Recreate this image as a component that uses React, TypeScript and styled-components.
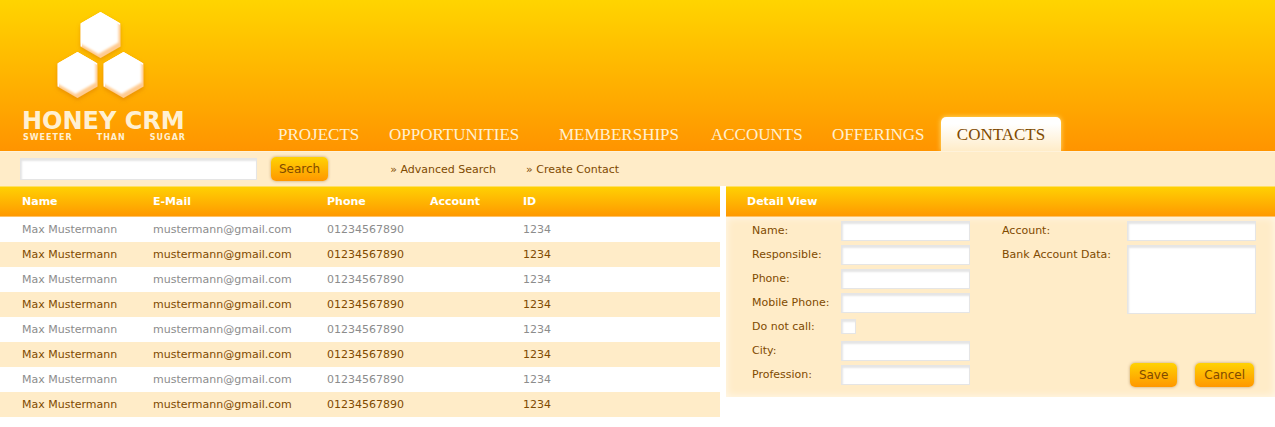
import React from "react";
import styled, { createGlobalStyle, css } from "styled-components";

const cream = "#ffecc8";
const brown = "#804a00";
const honey = "linear-gradient(#ffd203, #ff9700)";

const GlobalStyle = createGlobalStyle`
  * { box-sizing: border-box; }
  body {
    margin: 0;
    background: #fff;
    color: ${brown};
    font: 11px/14px "DejaVu Sans", Verdana, sans-serif;
  }
`;

const Header = styled.header`
  display: flex;
  align-items: flex-end;
  height: 151px;
  background: linear-gradient(#ffd400, #ff9400);
`;

const Brand = styled.div`
  flex: none;
  width: 278px;
  padding: 0 92px 9px 22px;
  color: #fff0d2;
  font-weight: bold;
`;

const Logo = styled.svg`
  display: block;
  width: 100px;
  height: 100px;
  margin-left: 28px;
`;

const BrandName = styled.div`
  font-size: 24px;
  line-height: 26px;
  white-space: nowrap;
`;

const Tagline = styled.div`
  display: flex;
  justify-content: space-between;
  padding-left: 1px;
  font-size: 8px;
  line-height: 8px;
  letter-spacing: 1px;
`;

const Nav = styled.nav`
  display: grid;
  grid-template-columns: 111px 170px 152px 121px 109px 120px;
  align-items: end;
`;

const NavLink = styled.a<{ $active?: boolean }>`
  height: 34px;
  color: #fff0d0;
  font: 17px/36px "Liberation Serif", serif;
  text-decoration: none;
  white-space: nowrap;
  ${(p) =>
    p.$active &&
    css`
      border-radius: 5px 5px 0 0;
      background: linear-gradient(#fff 20%, ${cream});
      box-shadow: 0 0 5px #ffe27a;
      color: ${brown};
      text-align: center;
      clip-path: inset(-8px -8px 0 -8px);
    `}
`;

const Toolbar = styled.form`
  display: flex;
  align-items: center;
  height: 35px;
  padding-left: 20px;
  border-top: 1px solid #fff2da;
  background: ${cream};
`;

const fieldStyle = css`
  display: block;
  margin: 0;
  padding: 2px 5px;
  border: 1px solid #e5e5e5;
  border-radius: 0;
  outline: none;
  background: #fff;
  box-shadow: inset 1px 2px 2px #e5e5e5;
  color: ${brown};
  font: inherit;
`;

const SearchInput = styled.input`
  ${fieldStyle}
  width: 237px;
  height: 22px;
`;

const Button = styled.button`
  height: 24px;
  padding: 0 9px;
  border: 0;
  border-radius: 5px;
  background: ${honey};
  box-shadow: 0 0 3px rgba(128, 74, 0, 0.5);
  color: ${brown};
  font: 12px/24px "DejaVu Sans", Verdana, sans-serif;
`;

const ToolbarLinks = styled.div`
  display: flex;
  gap: 30px;
  margin-left: 62px;
  padding-top: 2px;
`;

const ToolbarLink = styled.a`
  color: ${brown};
  text-decoration: none;
`;

const SearchButton = styled(Button)`
  margin-left: 14px;
  padding: 0 8px;
`;

const Main = styled.main`
  display: flex;
  align-items: flex-start;
  gap: 6px;
`;

const headBar = css`
  height: 31px;
  background: ${honey};
  box-shadow: inset 0 1px #ffe064, inset 0 -1px #ffc266;
  color: #fff;
  font-size: 11px;
  font-weight: bold;
  line-height: 31px;
`;

const ContactTable = styled.table`
  flex: 720 1 0;
  min-width: 0;
  border-collapse: collapse;
  table-layout: fixed;

  th, td {
    padding: 0;
    text-align: left;
  }
  th:first-child, td:first-child { padding-left: 22px; }
`;

const HeadRow = styled.tr`
  ${headBar}
`;

const Row = styled.tr`
  height: 25px;
  color: #8c8c8c;
  &:nth-child(even) {
    background: ${cream};
    color: ${brown};
  }
`;

const Detail = styled.section`
  flex: 549 1 0;
  min-width: 0;
`;

const DetailTitle = styled.h2`
  ${headBar}
  margin: 0;
  padding-left: 21px;
`;

const DetailForm = styled.form`
  display: flex;
  gap: 32px;
  padding: 2px 19px 10px 26px;
  background: ${cream};
  box-shadow: inset 0 0 8px rgba(255, 255, 255, 0.7);
`;

const FieldColumn = styled.div<{ $label: number }>`
  display: grid;
  grid-template-columns: ${(p) => p.$label}px 129px;
  grid-auto-rows: minmax(24px, auto);
  align-content: start;
`;

const Label = styled.label`
  line-height: 24px;
  white-space: nowrap;
`;

const Field = styled.input`
  ${fieldStyle}
  width: 100%;
  height: 20px;
  margin-top: 2px;
`;

const Area = styled.textarea`
  ${fieldStyle}
  width: 100%;
  height: 69px;
  margin-top: 2px;
  resize: none;
`;

const Check = styled.input`
  ${fieldStyle}
  appearance: none;
  width: 15px;
  height: 15px;
  margin-top: 4px;
  padding: 0;
  &:checked { background: #ff9700; }
`;

const SideColumn = styled.div`
  display: flex;
  flex-direction: column;
  justify-content: space-between;
`;

const Actions = styled.div`
  display: flex;
  justify-content: flex-end;
  gap: 18px;
  padding-right: 2px;
`;

const navItems = ["Projects", "Opportunities", "Memberships", "Accounts", "Offerings", "Contacts"];

const contacts = Array.from({ length: 8 }, () => ({
  name: "Max Mustermann",
  email: "mustermann@gmail.com",
  phone: "01234567890",
  account: "",
  id: "1234",
}));

const personFields = [
  { id: "name", label: "Name:" },
  { id: "responsible", label: "Responsible:" },
  { id: "phone", label: "Phone:" },
  { id: "mobile", label: "Mobile Phone:" },
  { id: "nocall", label: "Do not call:", check: true },
  { id: "city", label: "City:" },
  { id: "profession", label: "Profession:" },
];

const hexPoints = "20,0 40,11.5 40,34.5 20,46 0,34.5 0,11.5";

function Hexagon({ x, y }: { x: number; y: number }) {
  return (
    <g transform={`translate(${x} ${y})`}>
      <polygon points={hexPoints} fill="#ffcb90" filter="url(#drop)" />
      <g clipPath="url(#hex)">
        <polygon points={hexPoints} fill="#fff" transform="translate(-2 -4)" filter="url(#soft)" />
        <polyline points="0,34.5 0,11.5 20,0 40,11.5" fill="none" stroke="#fff" strokeWidth="3" />
      </g>
    </g>
  );
}

function HoneyLogo() {
  return (
    <Logo viewBox="0 0 100 100" aria-hidden="true">
      <defs>
        <clipPath id="hex">
          <polygon points={hexPoints} />
        </clipPath>
        <filter id="soft" x="-20%" y="-20%" width="140%" height="140%">
          <feGaussianBlur stdDeviation="1.2" />
        </filter>
        <filter id="drop" x="-30%" y="-30%" width="160%" height="160%">
          <feDropShadow dx="0" dy="2" stdDeviation="2" floodColor="#c86400" floodOpacity="0.4" />
        </filter>
      </defs>
      <Hexagon x={30.5} y={4} />
      <Hexagon x={7.5} y={44} />
      <Hexagon x={53.5} y={44} />
    </Logo>
  );
}

export default function App() {
  return (
    <>
      <GlobalStyle />
      <Header>
        <Brand>
          <HoneyLogo />
          <BrandName>HONEY CRM</BrandName>
          <Tagline>
            <span>SWEETER</span>
            <span>THAN</span>
            <span>SUGAR</span>
          </Tagline>
        </Brand>
        <Nav>
          {navItems.map((item) => (
            <NavLink key={item} href={`#${item.toLowerCase()}`} $active={item === "Contacts"}>
              {item.toUpperCase()}
            </NavLink>
          ))}
        </Nav>
      </Header>
      <Toolbar onSubmit={(e) => e.preventDefault()}>
        <SearchInput type="text" aria-label="Search" />
        <SearchButton type="submit">Search</SearchButton>
        <ToolbarLinks>
          <ToolbarLink href="#advanced">» Advanced Search</ToolbarLink>
          <ToolbarLink href="#create">» Create Contact</ToolbarLink>
        </ToolbarLinks>
      </Toolbar>
      <Main>
        <ContactTable>
          <colgroup>
            <col style={{ width: 153 }} />
            <col style={{ width: 174 }} />
            <col style={{ width: 103 }} />
            <col style={{ width: 93 }} />
            <col />
          </colgroup>
          <thead>
            <HeadRow>
              <th scope="col">Name</th>
              <th scope="col">E-Mail</th>
              <th scope="col">Phone</th>
              <th scope="col">Account</th>
              <th scope="col">ID</th>
            </HeadRow>
          </thead>
          <tbody>
            {contacts.map((c, i) => (
              <Row key={i}>
                <td>{c.name}</td>
                <td>{c.email}</td>
                <td>{c.phone}</td>
                <td>{c.account}</td>
                <td>{c.id}</td>
              </Row>
            ))}
          </tbody>
        </ContactTable>
        <Detail>
          <DetailTitle>Detail View</DetailTitle>
          <DetailForm onSubmit={(e) => e.preventDefault()}>
            <FieldColumn $label={89}>
              {personFields.map((f) => (
                <React.Fragment key={f.id}>
                  <Label htmlFor={f.id}>{f.label}</Label>
                  {f.check ? <Check type="checkbox" id={f.id} /> : <Field type="text" id={f.id} />}
                </React.Fragment>
              ))}
            </FieldColumn>
            <SideColumn>
              <FieldColumn $label={125}>
                <Label htmlFor="account">Account:</Label>
                <Field type="text" id="account" />
                <Label htmlFor="bank">Bank Account Data:</Label>
                <Area id="bank" />
              </FieldColumn>
              <Actions>
                <Button type="submit">Save</Button>
                <Button type="button">Cancel</Button>
              </Actions>
            </SideColumn>
          </DetailForm>
        </Detail>
      </Main>
    </>
  );
}
